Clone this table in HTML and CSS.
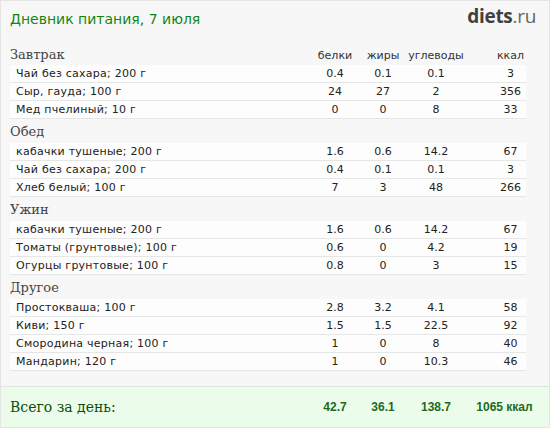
FILE: index.html
```html
<!DOCTYPE html>
<html lang="ru">
<head>
<meta charset="utf-8">
<link rel="stylesheet" href="styles.css">
</head>
<body>
<div class="diary">
  <header class="top">
    <h1 class="title">Дневник питания, 7 июля</h1>
    <div class="logo"><b>diets</b>.ru</div>
  </header>

  <section class="meal">
    <div class="meal-head">
      <h2>Завтрак</h2>
      <span class="c1">белки</span><span class="c2">жиры</span><span class="c3">углеводы</span><span class="c4">ккал</span>
    </div>
    <div class="row"><span class="name">Чай без сахара; 200 г</span><span class="c1">0.4</span><span class="c2">0.1</span><span class="c3">0.1</span><span class="c4">3</span></div>
    <div class="row"><span class="name">Сыр, гауда; 100 г</span><span class="c1">24</span><span class="c2">27</span><span class="c3">2</span><span class="c4">356</span></div>
    <div class="row"><span class="name">Мед пчелиный; 10 г</span><span class="c1">0</span><span class="c2">0</span><span class="c3">8</span><span class="c4">33</span></div>
  </section>

  <section class="meal">
    <div class="meal-head"><h2>Обед</h2></div>
    <div class="row"><span class="name">кабачки тушеные; 200 г</span><span class="c1">1.6</span><span class="c2">0.6</span><span class="c3">14.2</span><span class="c4">67</span></div>
    <div class="row"><span class="name">Чай без сахара; 200 г</span><span class="c1">0.4</span><span class="c2">0.1</span><span class="c3">0.1</span><span class="c4">3</span></div>
    <div class="row"><span class="name">Хлеб белый; 100 г</span><span class="c1">7</span><span class="c2">3</span><span class="c3">48</span><span class="c4">266</span></div>
  </section>

  <section class="meal">
    <div class="meal-head"><h2>Ужин</h2></div>
    <div class="row"><span class="name">кабачки тушеные; 200 г</span><span class="c1">1.6</span><span class="c2">0.6</span><span class="c3">14.2</span><span class="c4">67</span></div>
    <div class="row"><span class="name">Томаты (грунтовые); 100 г</span><span class="c1">0.6</span><span class="c2">0</span><span class="c3">4.2</span><span class="c4">19</span></div>
    <div class="row"><span class="name">Огурцы грунтовые; 100 г</span><span class="c1">0.8</span><span class="c2">0</span><span class="c3">3</span><span class="c4">15</span></div>
  </section>

  <section class="meal">
    <div class="meal-head"><h2>Другое</h2></div>
    <div class="row"><span class="name">Простокваша; 100 г</span><span class="c1">2.8</span><span class="c2">3.2</span><span class="c3">4.1</span><span class="c4">58</span></div>
    <div class="row"><span class="name">Киви; 150 г</span><span class="c1">1.5</span><span class="c2">1.5</span><span class="c3">22.5</span><span class="c4">92</span></div>
    <div class="row"><span class="name">Смородина черная; 100 г</span><span class="c1">1</span><span class="c2">0</span><span class="c3">8</span><span class="c4">40</span></div>
    <div class="row"><span class="name">Мандарин; 120 г</span><span class="c1">1</span><span class="c2">0</span><span class="c3">10.3</span><span class="c4">46</span></div>
  </section>

  <footer class="total">
    <span class="total-label">Всего за день:</span>
    <span class="c1">42.7</span><span class="c2">36.1</span><span class="c3">138.7</span><span class="c4">1065 ккал</span>
  </footer>
</div>
</body>
</html>
```

FILE: styles.css
```css
* { box-sizing: border-box; margin: 0; padding: 0; }
body { margin: 0; background: #f7f7f7; }
.diary {
  width: 550px;
  height: 428px;
  background: #f7f7f7;
  border: 1px solid #e4e4e4;
  display: flex;
  flex-direction: column;
  overflow: hidden;
}
.top {
  height: 44px;
  display: flex;
  justify-content: space-between;
  align-items: flex-start;
  padding: 7px 13px 0 9px;
}
.title {
  font: normal 14px "DejaVu Sans", Verdana, sans-serif;
  color: #138513;
  line-height: 20px;
  padding-top: 1px;
}
.logo {
  font: normal 19px "Open Sans", sans-serif;
  color: #666;
  line-height: 20px;
  letter-spacing: -0.3px;
  margin-top: -2px;
}
.logo b { font-weight: 700; color: #404040; }

.meal { padding: 0 23px 0 9px; }
.meal-head, .row, .total {
  display: grid;
  grid-template-columns: 302px 46px 50px 56px 61px;
  align-items: end;
}
.meal-head {
  height: 24px;
  padding-bottom: 3px;
}
.meal:first-of-type .meal-head { height: 20px; padding-bottom: 2px; }
.meal-head h2 {
  font: normal 13px "DejaVu Serif", Georgia, serif;
  color: #444;
  line-height: 16px;
}
.meal-head span {
  font: 11px "DejaVu Sans", Verdana, sans-serif;
  color: #333;
  text-align: center;
  line-height: 14px;
}
.row {
  height: 18px;
  background: #fdfdfd;
  border-bottom: 1px solid #e6e6e6;
  align-items: center;
  font: 11px "DejaVu Sans", Verdana, sans-serif;
  color: #222;
}
.row span { line-height: 17px; text-align: center; }
.row .name { text-align: left; padding-left: 6px; letter-spacing: 0.25px; }
.c4 { padding-left: 32px; }

.total {
  margin-top: auto;
  height: 41px;
  background: #ebfdea;
  border-top: 1px solid #dde6dc;
  padding-left: 9px;
  align-items: center;
  grid-template-columns: 302px 46px 50px 56px 1fr;
}
.total-label {
  font: normal 14px "DejaVu Serif", Georgia, serif;
  color: #0b4d0b;
}
.total span:not(.total-label) {
  font: bold 12px "Liberation Sans", Arial, sans-serif;
  color: #216a1d;
  text-align: center;
}
.total .c4 { padding-left: 0; text-align: right; padding-right: 4px; }
```
